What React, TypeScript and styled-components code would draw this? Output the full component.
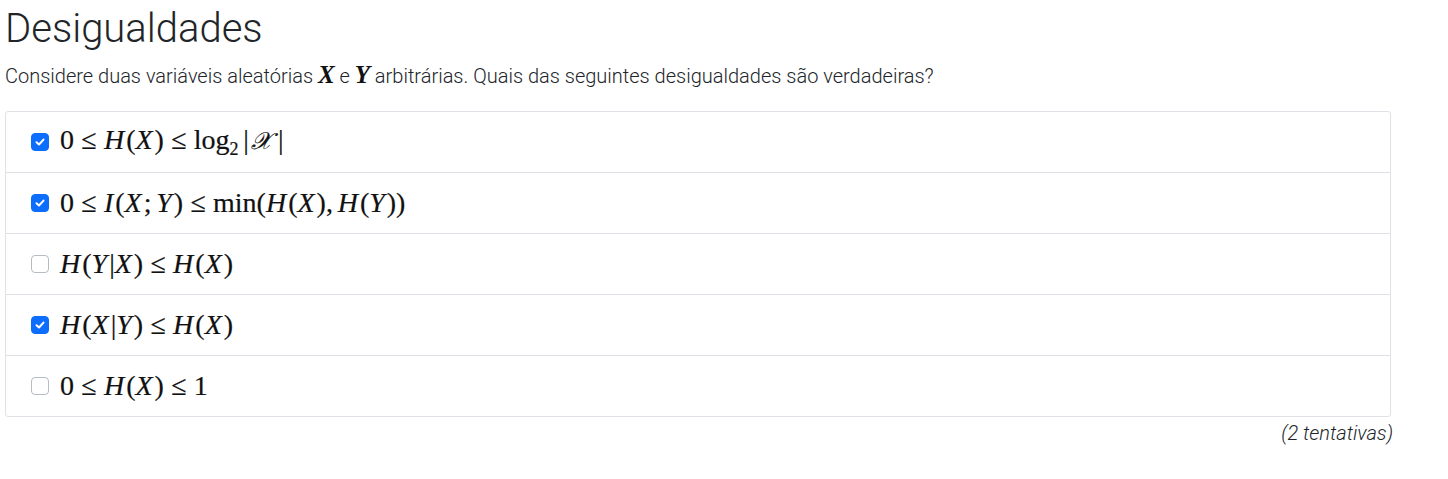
import React from "react";
import styled, { createGlobalStyle } from "styled-components";

const Global = createGlobalStyle`
  body {
    margin: 0;
    background: #fff;
    color: #212529;
    font-family: Roboto, "Noto Sans", sans-serif;
  }
`;

const Page = styled.div`
  width: 1386px;
  padding: 5px 0 0 5px;
`;

const Title = styled.h1`
  margin: 0 0 8px 0;
  font-size: 40px;
  font-weight: 300;
  line-height: 1.2;
`;

const Prompt = styled.p`
  margin: 0 0 20px 0;
  font-size: 20px;
  font-weight: 300;
  line-height: 1.5;
`;

const List = styled.div`
  display: flex;
  flex-direction: column;
  border: 1px solid #dee2e6;
  border-radius: 3px;
`;

const Row = styled.label`
  display: flex;
  align-items: center;
  gap: 11px;
  height: 60px;
  padding: 0 25px;
  & + & {
    border-top: 1px solid #dee2e6;
  }
`;

const Box = styled.span<{ $on: boolean }>`
  width: 18px;
  height: 18px;
  box-sizing: border-box;
  border-radius: 4px;
  flex: none;
  display: flex;
  align-items: center;
  justify-content: center;
  background: ${(p) => (p.$on ? "#0d6efd" : "#fff")};
  border: 1px solid ${(p) => (p.$on ? "#0d6efd" : "#b6bcc2")};
`;

const Math = styled.span`
  font-family: "Liberation Serif", "DejaVu Serif", serif;
  font-size: 28px;
  color: #111;
  white-space: nowrap;
  line-height: 1;
  -webkit-text-stroke: 0.2px #111;
`;

const V = styled.i`
  font-style: italic;
  padding-right: 2px;
`;

const Cal = styled.i`
  display: inline-block;
  font-family: "DejaVu Serif", "Liberation Serif", serif;
  font-style: italic;
  font-size: 24px;
  padding: 0 6px 0 2px;
`;

const Rel = styled.span`
  margin: 0 0.26em;
`;

const Punct = styled.span`
  margin-right: 0.17em;
`;

const Op = styled.span`
  margin-right: 0.17em;
`;

const Sub = styled.sub`
  font-size: 18px;
  vertical-align: -6px;
`;

const InlineVar = styled.i`
  font-family: "Liberation Serif", "DejaVu Serif", serif;
  font-size: 25px;
  font-weight: 700;
  font-style: italic;
  line-height: 1;
  color: #111;
`;

const Note = styled.div`
  text-align: right;
  font-style: italic;
  font-size: 20px;
  font-weight: 300;
  margin-top: 4px;
  margin-right: -2px;
`;

const Check = () => (
  <svg width="12" height="12" viewBox="0 0 12 12">
    <path d="M2.5 6.2 L5 8.5 L9.5 3.6" fill="none" stroke="#fff" strokeWidth="2" strokeLinecap="round" strokeLinejoin="round" />
  </svg>
);

const items: { on: boolean; math: React.ReactNode }[] = [
  {
    on: true,
    math: (
      <>
        0<Rel>≤</Rel><V>H</V>(<V>X</V>)<Rel>≤</Rel>
        <Op>
          log<Sub>2</Sub>
        </Op>
        |<Cal>𝒳</Cal>|
      </>
    ),
  },
  {
    on: true,
    math: (
      <>
        0<Rel>≤</Rel><V>I</V>(<V>X</V>
        <Punct>;</Punct>
        <V>Y</V>)<Rel>≤</Rel>min(<V>H</V>(<V>X</V>)<Punct>,</Punct>
        <V>H</V>(<V>Y</V>))
      </>
    ),
  },
  {
    on: false,
    math: (
      <>
        <V>H</V>(<V>Y</V>|<V>X</V>)<Rel>≤</Rel><V>H</V>(<V>X</V>)
      </>
    ),
  },
  {
    on: true,
    math: (
      <>
        <V>H</V>(<V>X</V>|<V>Y</V>)<Rel>≤</Rel><V>H</V>(<V>X</V>)
      </>
    ),
  },
  {
    on: false,
    math: (
      <>
        0<Rel>≤</Rel><V>H</V>(<V>X</V>)<Rel>≤</Rel>1
      </>
    ),
  },
];

export default function App() {
  return (
    <Page>
      <Global />
      <Title>Desigualdades</Title>
      <Prompt>
        Considere duas variáveis aleatórias <InlineVar>X</InlineVar> e <InlineVar>Y</InlineVar> arbitrárias. Quais das seguintes
        desigualdades são verdadeiras?
      </Prompt>
      <List>
        {items.map((it, i) => (
          <Row key={i}>
            <Box $on={it.on}>{it.on && <Check />}</Box>
            <Math>{it.math}</Math>
          </Row>
        ))}
      </List>
      <Note>(2 tentativas)</Note>
    </Page>
  );
}
